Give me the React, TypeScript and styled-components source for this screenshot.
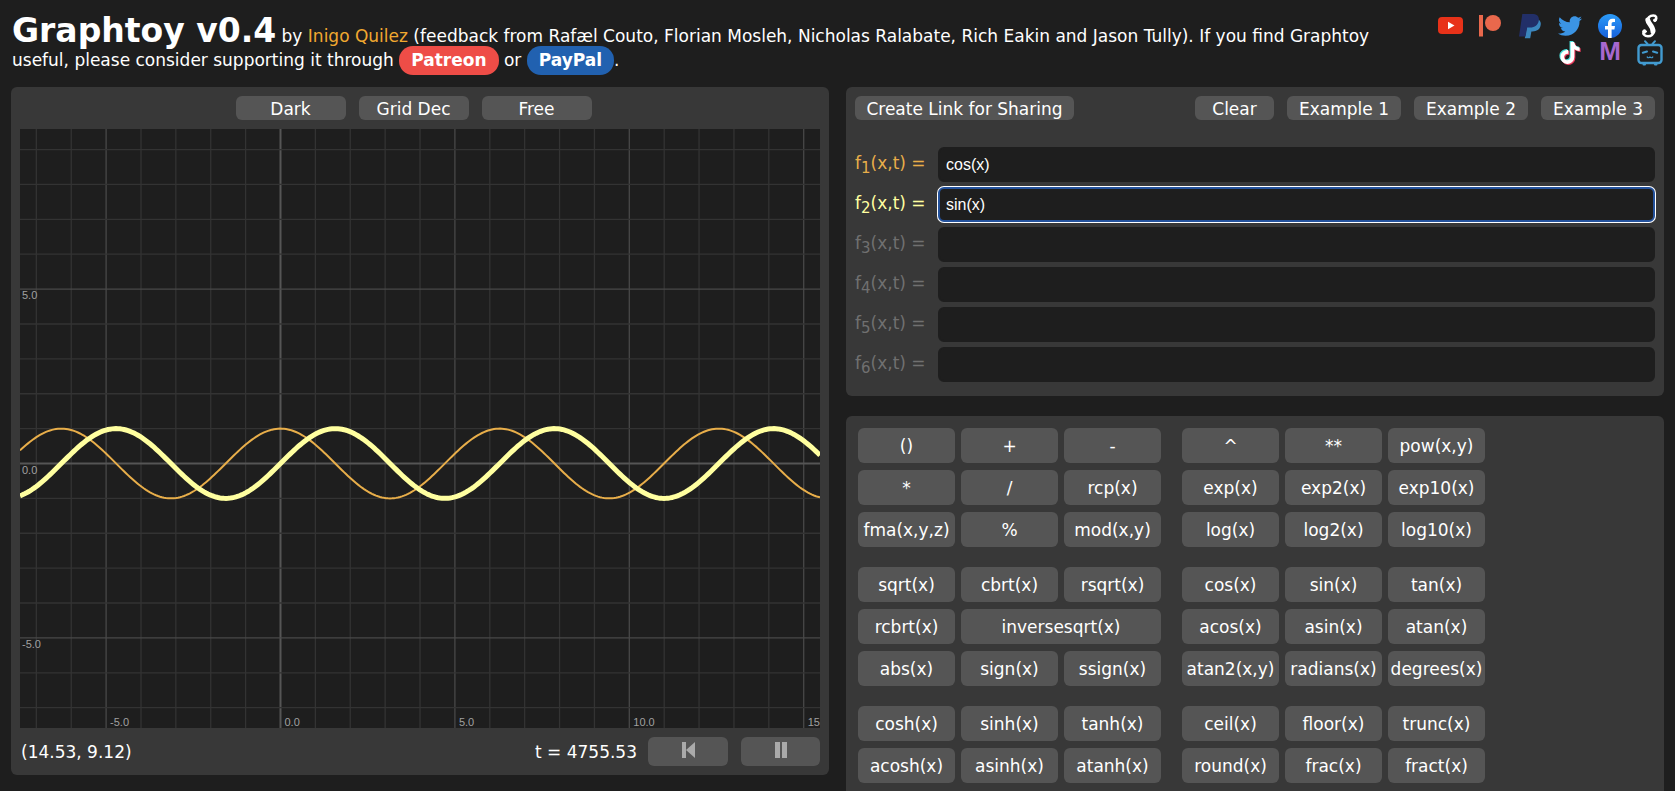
import React, { useState } from "react";
import styled, { createGlobalStyle } from "styled-components";
import { FaTwitter, FaTiktok } from "react-icons/fa";

const colors = {
  page: "#1e1e1e",
  panel: "#383838",
  button: "#555555",
  text: "#ffffff",
  muted: "#707070",
  f1: "#e8ae4a",
  f2: "#ffffa0",
};

const GlobalStyle = createGlobalStyle`
  *, *::before, *::after { box-sizing: border-box; }
  html { background: ${colors.page}; }
  body {
    margin: 0;
    background: ${colors.page};
    color: ${colors.text};
    font: 17px/24px Verdana, "DejaVu Sans", sans-serif;
  }
  button, input { font: inherit; color: inherit; }
`;

const Page = styled.div`
  display: flex;
  flex-direction: column;
  min-height: 100vh;
  padding: 11px 11px 0;
`;

const Header = styled.header`
  display: flex;
  justify-content: space-between;
  align-items: flex-start;
  height: 76px;
`;

const Intro = styled.p`
  margin: 0;
  padding: 3px 0 0 1px;
  line-height: 24px;
  white-space: nowrap;
`;

const Title = styled.h1`
  display: inline;
  margin: 0;
  font-size: 33px;
  line-height: 34px;
`;

const AuthorLink = styled.a`
  color: #f0a830;
  text-decoration: none;
`;

const Pill = styled.a<{ $color: string }>`
  display: inline-block;
  height: 29px;
  margin: -3px 0;
  padding: 0 12px;
  border-radius: 14px;
  background: ${(p) => p.$color};
  color: ${colors.text};
  font-weight: bold;
  line-height: 29px;
  text-decoration: none;
`;

const Socials = styled.nav`
  display: grid;
  grid-template-columns: repeat(6, 24px);
  grid-auto-rows: 27px;
  gap: 0 16px;
  padding: 1px 2px 0 0;
`;

const SocialLink = styled.a<{ $column?: number; $color?: string }>`
  display: flex;
  align-items: center;
  justify-content: center;
  grid-column: ${(p) => p.$column ?? "auto"};
  color: ${(p) => p.$color ?? "inherit"};
  text-decoration: none;
  svg { flex: none; overflow: visible; }
`;

const Letter = styled.span`
  font: bold 26px/24px "Liberation Sans", Arial, sans-serif;
  padding-bottom: 3px;
`;

const Columns = styled.main`
  display: grid;
  grid-template-columns: 1fr 1fr;
  gap: 17px;
  flex: 1;
`;

const Panel = styled.section`
  padding: 9px;
  border-radius: 6px;
  background: ${colors.panel};
`;

const GraphPanel = styled(Panel)`
  align-self: start;
`;

const RightColumn = styled.div`
  display: flex;
  flex-direction: column;
  gap: 20px;
  min-width: 0;
`;

const FormulaPanel = styled(Panel)`
  padding-bottom: 14px;
`;

const KeypadPanel = styled(Panel)`
  flex: 1;
  display: flex;
  flex-direction: column;
  gap: 20px;
  padding: 12px 12px 8px;
  border-radius: 6px 6px 0 0;
`;

const Toolbar = styled.div<{ $center?: boolean }>`
  display: flex;
  gap: 13px;
  justify-content: ${(p) => (p.$center ? "center" : "flex-start")};
  padding-right: ${(p) => (p.$center ? "13px" : "0")};
`;

const Spacer = styled.div`
  flex: 1;
`;

const Button = styled.button<{ $width: number }>`
  display: flex;
  align-items: center;
  justify-content: center;
  width: ${(p) => p.$width}px;
  height: 24px;
  padding: 2px 0 0;
  border: 0;
  border-radius: 6px;
  background: ${colors.button};
  line-height: 24px;
  white-space: nowrap;
  cursor: pointer;
`;

const PlaybackButton = styled(Button)`
  height: 29px;
  padding: 0 0 3px;
`;

const Chart = styled.svg`
  display: block;
  width: 100%;
  margin: 9px 0;
  background: ${colors.page};
  text {
    font: 11px "Liberation Sans", Arial, sans-serif;
    fill: #a0a0a0;
  }
`;

const StatusBar = styled.div`
  display: flex;
  align-items: center;
  height: 29px;
  padding-left: 1px;
`;

const Time = styled.span`
  margin: 0 11px 0 auto;
`;

const Playback = styled.div`
  display: flex;
  gap: 13px;
`;

const FormulaList = styled.div`
  display: flex;
  flex-direction: column;
  gap: 5px;
  margin-top: 27px;
`;

const FormulaRow = styled.div`
  display: flex;
  height: 35px;
`;

const FormulaLabel = styled.label<{ $color: string }>`
  width: 83px;
  color: ${(p) => p.$color};
  line-height: 33px;
  white-space: nowrap;
  sub {
    font-size: 15px;
    line-height: 0;
  }
`;

const FormulaInput = styled.input<{ $active: boolean }>`
  flex: 1;
  min-width: 0;
  padding: 0 6px;
  border: 2px solid ${(p) => (p.$active ? "#24529c" : colors.page)};
  border-radius: 6px;
  outline: none;
  box-shadow: ${(p) => (p.$active ? "0 0 0 1px #ffffff" : "none")};
  background: ${colors.page};
  font: 16px/24px "Liberation Sans", Arial, sans-serif;
`;

const KeyBand = styled.div`
  display: flex;
  gap: 21px;
`;

const KeyGrid = styled.div`
  display: grid;
  grid-template-columns: repeat(3, 97px);
  grid-auto-rows: 35px;
  gap: 7px 6px;
`;

const Key = styled.button<{ $wide?: boolean }>`
  grid-column: span ${(p) => (p.$wide ? 2 : 1)};
  padding: 0;
  border: 0;
  border-radius: 6px;
  background: ${colors.button};
  white-space: nowrap;
  cursor: pointer;
`;

const CHART = { width: 800, height: 599, originX: 260.5, originY: 334.5, unit: 34.88 };

const toX = (x: number) => CHART.originX + x * CHART.unit;
const toY = (y: number) => CHART.originY - y * CHART.unit;

const range = (from: number, to: number) =>
  Array.from({ length: to - from + 1 }, (_, i) => from + i);

const gridColor = (n: number) => (n === 0 ? "#555555" : n % 5 === 0 ? "#484848" : "#333333");

const curve = (fn: (x: number) => number) =>
  range(0, CHART.width / 2)
    .map((i) => {
      const px = i * 2;
      const x = (px - CHART.originX) / CHART.unit;
      return `${px},${toY(fn(x)).toFixed(2)}`;
    })
    .join(" ");

function Graph() {
  const ordered = (ns: number[]) => [...ns].sort((a, b) => Number(a % 5 === 0) - Number(b % 5 === 0));
  return (
    <Chart viewBox={`0 0 ${CHART.width} ${CHART.height}`} role="img" aria-label="Function graph">
      {ordered(range(-7, 15)).map((n) => (
        <line key={`x${n}`} x1={toX(n)} x2={toX(n)} y1={0} y2={CHART.height}
          stroke={gridColor(n)} strokeWidth={n === 0 ? 2 : 1.3} />
      ))}
      {ordered(range(-7, 9)).map((n) => (
        <line key={`y${n}`} y1={toY(n)} y2={toY(n)} x1={0} x2={CHART.width}
          stroke={gridColor(n)} strokeWidth={n === 0 ? 2 : 1.3} />
      ))}
      {[-5, 0, 5, 10, 15].map((n) => (
        <text key={`tx${n}`} x={toX(n) + 4} y={CHART.height - 2}>{n.toFixed(1)}</text>
      ))}
      {[-5, 0, 5].map((n) => (
        <text key={`ty${n}`} x={2} y={toY(n) + 10}>{n.toFixed(1)}</text>
      ))}
      <polyline points={curve(Math.cos)} fill="none" stroke={colors.f1} strokeWidth={2} />
      <polyline points={curve(Math.sin)} fill="none" stroke={colors.f2} strokeWidth={5} />
    </Chart>
  );
}

const YouTubeIcon = () => (
  <svg width="25" height="17" viewBox="0 0 25 17">
    <rect width="25" height="17" rx="4" fill="#e83219" />
    <path d="M10 4.700v7.600l6.500-3.800Z" fill="#ffffff" />
  </svg>
);

const PatreonIcon = () => (
  <svg width="24" height="24" viewBox="0 0 24 24" fill="#e9684c">
    <rect x="1" y="1" width="4" height="21.500" />
    <circle cx="15" cy="9" r="8" />
  </svg>
);

const PayPalIcon = () => (
  <svg width="24" height="26" viewBox="0 0 24 26">
    <path d="M6.800 25.300 9.500 10.500 20.500 6.500C22.600 8 23.300 10 22.600 12.600c-1 4.200-3.900 5.800-8 5.800h-1.200l-1.200 6.900Z" fill="#3b86bd" />
    <path d="M4.300 1h9.900c4.700 0 7.300 2.200 6.600 6.500-.8 4.800-3.900 7-8.700 7H9.200L7.500 23.500H1Z" fill="#222f68" />
  </svg>
);

const FacebookIcon = () => (
  <svg width="24" height="24" viewBox="0 0 24 24">
    <defs>
      <linearGradient id="facebook-blue" x1="0" y1="0" x2="0" y2="1">
        <stop offset="0" stopColor="#2b9bf7" />
        <stop offset="1" stopColor="#1660dc" />
      </linearGradient>
    </defs>
    <circle cx="12" cy="12" r="12" fill="url(#facebook-blue)" />
    <path d="M10 24v-8.500H7V12h3V9.400C10 6.400 11.800 4.700 14.500 4.700c1.300 0 2.500.2 2.500.2v3h-1.500c-1.500 0-1.900.9-1.900 1.800V12H17l-.6 3.500h-2.800V24Z" fill="#ffffff" />
  </svg>
);

const ShadertoyIcon = () => (
  <svg width="18" height="24" viewBox="0 0 18 24" fill="none" stroke="#ffffff" strokeLinecap="round">
    <path d="M14.300 6.500C16.300 4 15.300 1.500 12.300 1.500 8.700 1.500 6.300 4 6.500 7c.3 3.500 6.100 5.700 6.100 10.200 0 3.300-2.600 5-5.600 5-3.600 0-5.400-2.300-4.300-4.500" strokeWidth="2.500" />
    <path d="M6.800 6C7.200 10 12.200 12 12 17.500" strokeWidth="5" />
    <circle cx="3.500" cy="17.500" r="1.800" fill="#ffffff" />
    <circle cx="13.800" cy="6.300" r="1.300" fill="#ffffff" />
  </svg>
);

const BilibiliIcon = () => (
  <svg width="26" height="26" viewBox="0 0 26 26" fill="none" stroke="#429bd0" strokeLinecap="round" strokeLinejoin="round">
    <rect x="1.500" y="5" width="23" height="18" rx="3" strokeWidth="2.400" />
    <path d="M8 1.200 10.500 4M18 1.200 15.500 4" strokeWidth="2" />
    <path d="M5.800 12.800 10 11.500M20.200 12.800 16 11.500" strokeWidth="2" />
    <path d="M10.200 17c.9 1 2 1 2.800-.1.800 1.100 1.900 1.100 2.800.1" strokeWidth="1.200" />
    <path d="M6.500 24.500h1.500M18 24.500h1.500" strokeWidth="2" />
  </svg>
);

const TikTokStack = styled.span`
  display: grid;
  isolation: isolate;
  svg { grid-area: 1 / 1; }
`;

const TikTokLayer = styled(FaTiktok)<{ $shift: number }>`
  transform: translate(${(p) => p.$shift}px, ${(p) => p.$shift}px);
`;

const TikTokIcon = () => (
  <TikTokStack>
    <TikTokLayer size={22} color="#4de0dc" $shift={-1} />
    <TikTokLayer size={22} color="#ee3a5c" $shift={1} />
    <TikTokLayer size={22} color="#ffffff" $shift={0} />
  </TikTokStack>
);

const RewindIcon = () => (
  <svg width="13" height="16" viewBox="0 0 13 16" fill="#aaaaaa">
    <path d="M0 0h4v16H0ZM13 0v16L4 8Z" />
  </svg>
);

const PauseIcon = () => (
  <svg width="12" height="16" viewBox="0 0 12 16" fill="#aaaaaa">
    <path d="M0 0h5v16H0ZM7 0h5v16H7Z" />
  </svg>
);

const initialFormulas = ["cos(x)", "sin(x)", "", "", "", ""];
const labelColors = [colors.f1, colors.f2];

const keypad: string[][][] = [
  [
    ["()", "+", "-", "*", "/", "rcp(x)", "fma(x,y,z)", "%", "mod(x,y)"],
    ["^", "**", "pow(x,y)", "exp(x)", "exp2(x)", "exp10(x)", "log(x)", "log2(x)", "log10(x)"],
  ],
  [
    ["sqrt(x)", "cbrt(x)", "rsqrt(x)", "rcbrt(x)", "inversesqrt(x)", "abs(x)", "sign(x)", "ssign(x)"],
    ["cos(x)", "sin(x)", "tan(x)", "acos(x)", "asin(x)", "atan(x)", "atan2(x,y)", "radians(x)", "degrees(x)"],
  ],
  [
    ["cosh(x)", "sinh(x)", "tanh(x)", "acosh(x)", "asinh(x)", "atanh(x)"],
    ["ceil(x)", "floor(x)", "trunc(x)", "round(x)", "frac(x)", "fract(x)"],
  ],
];

export default function App() {
  const [formulas, setFormulas] = useState(initialFormulas);
  const [active, setActive] = useState(1);

  const update = (index: number, value: string) =>
    setFormulas((all) => all.map((f, i) => (i === index ? value : f)));

  return (
    <>
      <GlobalStyle />
      <Page>
        <Header>
          <Intro>
            <Title>Graphtoy v0.4</Title> by <AuthorLink href="#author">Inigo Quilez</AuthorLink>{" "}
            (feedback from Rafæl Couto, Florian Mosleh, Nicholas Ralabate, Rich Eakin and Jason
            Tully). If you find Graphtoy
            <br />
            useful, please consider supporting it through{" "}
            <Pill href="#patreon" $color="#ee4d47">Patreon</Pill> or{" "}
            <Pill href="#paypal" $color="#2161b0">PayPal</Pill>.
          </Intro>
          <Socials aria-label="Social links">
            <SocialLink href="#youtube" aria-label="YouTube"><YouTubeIcon /></SocialLink>
            <SocialLink href="#patreon" aria-label="Patreon"><PatreonIcon /></SocialLink>
            <SocialLink href="#paypal" aria-label="PayPal"><PayPalIcon /></SocialLink>
            <SocialLink href="#twitter" aria-label="Twitter" $color="#3b94e4"><FaTwitter size={24} /></SocialLink>
            <SocialLink href="#facebook" aria-label="Facebook"><FacebookIcon /></SocialLink>
            <SocialLink href="#shadertoy" aria-label="Shadertoy"><ShadertoyIcon /></SocialLink>
            <SocialLink href="#tiktok" aria-label="TikTok" $column={4}><TikTokIcon /></SocialLink>
            <SocialLink href="#m" $color="#a868cf"><Letter>M</Letter></SocialLink>
            <SocialLink href="#bilibili" aria-label="Bilibili"><BilibiliIcon /></SocialLink>
          </Socials>
        </Header>

        <Columns>
          <GraphPanel>
            <Toolbar $center>
              <Button $width={110}>Dark</Button>
              <Button $width={110}>Grid Dec</Button>
              <Button $width={110}>Free</Button>
            </Toolbar>
            <Graph />
            <StatusBar>
              <span>(14.53, 9.12)</span>
              <Time>t = 4755.53</Time>
              <Playback>
                <PlaybackButton $width={80} aria-label="Rewind"><RewindIcon /></PlaybackButton>
                <PlaybackButton $width={79} aria-label="Pause"><PauseIcon /></PlaybackButton>
              </Playback>
            </StatusBar>
          </GraphPanel>

          <RightColumn>
            <FormulaPanel>
              <Toolbar>
                <Button $width={219}>Create Link for Sharing</Button>
                <Spacer />
                <Button $width={79} onClick={() => setFormulas(["", "", "", "", "", ""])}>Clear</Button>
                <Button $width={114}>Example 1</Button>
                <Button $width={114}>Example 2</Button>
                <Button $width={114}>Example 3</Button>
              </Toolbar>
              <FormulaList>
                {formulas.map((value, i) => (
                  <FormulaRow key={i}>
                    <FormulaLabel htmlFor={`formula${i + 1}`} $color={value ? labelColors[i % 2] : colors.muted}>
                      f<sub>{i + 1}</sub>(x,t) =
                    </FormulaLabel>
                    <FormulaInput
                      id={`formula${i + 1}`}
                      type="text"
                      value={value}
                      $active={active === i}
                      onFocus={() => setActive(i)}
                      onChange={(e) => update(i, e.target.value)}
                    />
                  </FormulaRow>
                ))}
              </FormulaList>
            </FormulaPanel>

            <KeypadPanel>
              {keypad.map((band, b) => (
                <KeyBand key={b}>
                  {band.map((keys, g) => (
                    <KeyGrid key={g}>
                      {keys.map((name) => (
                        <Key key={name} $wide={name === "inversesqrt(x)"}>{name}</Key>
                      ))}
                    </KeyGrid>
                  ))}
                </KeyBand>
              ))}
            </KeypadPanel>
          </RightColumn>
        </Columns>
      </Page>
    </>
  );
}
